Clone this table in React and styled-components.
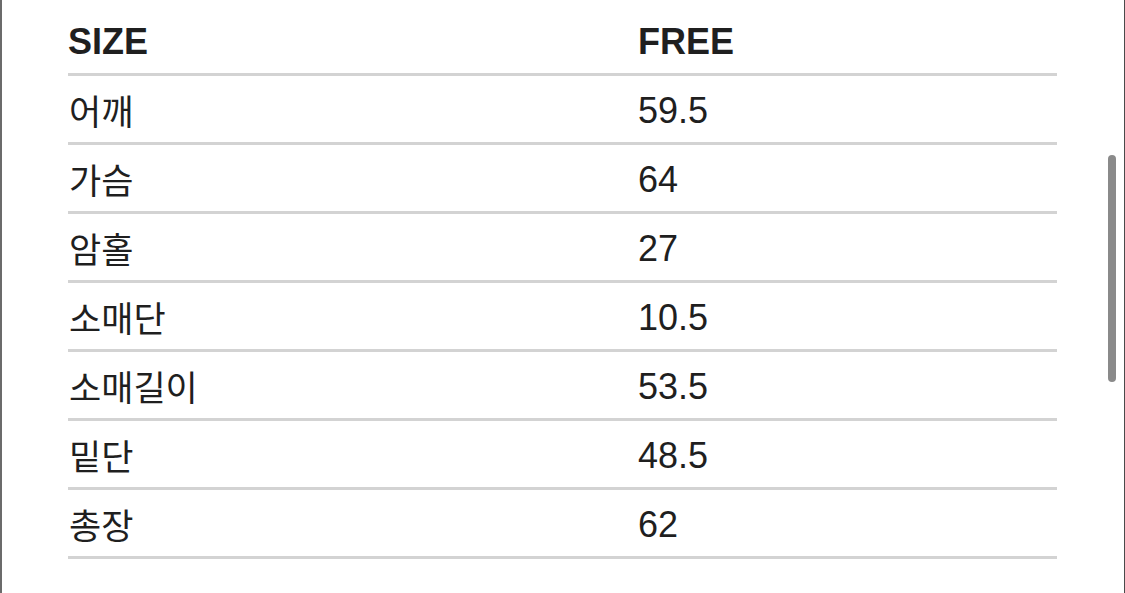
import React from "react";
import styled, { createGlobalStyle } from "styled-components";

const Global = createGlobalStyle`
  html, body { margin: 0; padding: 0; background: #ffffff; }
  body { font-family: "Liberation Sans", "Noto Sans CJK KR", Arial, sans-serif; }
`;

const Frame = styled.div`
  position: relative;
  box-sizing: border-box;
  width: 1125px;
  height: 593px;
  overflow: hidden;
  background: #ffffff;
  border-left: 2px solid #6b6b6b;
  border-right: 1px solid #4a4a4a;
`;

const Table = styled.div`
  width: 989px;
  margin: 7px 0 0 66px;
  display: flex;
  flex-direction: column;
`;

const Row = styled.div`
  display: grid;
  grid-template-columns: 570px 1fr;
  align-items: center;
  height: 66px;
  border-bottom: 3px solid #d3d3d3;
`;

const Cell = styled.div`
  font-family: "Liberation Sans", "Noto Sans CJK KR", Arial, sans-serif;
  font-size: 36px;
  line-height: 1;
  padding-top: 3px;
  color: #1f1f1f;
  font-weight: ${(p) => (p.$head ? 700 : 400)};
  white-space: nowrap;
`;

const Label = styled(Cell)`
  font-family: ${(p) =>
    p.$head
      ? `"Liberation Sans", "Noto Sans CJK KR", sans-serif`
      : `"Noto Sans CJK KR", "Liberation Sans", sans-serif`};
  font-size: ${(p) => (p.$head ? "36px" : "35px")};
  padding-top: ${(p) => (p.$head ? "3px" : "1px")};
  padding-left: ${(p) => (p.$head ? "0" : "1px")};
`;

const Thumb = styled.div`
  position: absolute;
  left: 1106px;
  top: 155px;
  width: 8px;
  height: 227px;
  border-radius: 4px;
  background: #8a8a8a;
`;

const rows = [
  ["어깨", "59.5"],
  ["가슴", "64"],
  ["암홀", "27"],
  ["소매단", "10.5"],
  ["소매길이", "53.5"],
  ["밑단", "48.5"],
  ["총장", "62"],
];

export default function App() {
  return (
    <>
      <Global />
      <Frame>
        <Table>
          <Row>
            <Label $head>SIZE</Label>
            <Cell $head>FREE</Cell>
          </Row>
          {rows.map(([k, v]) => (
            <Row key={k}>
              <Label>{k}</Label>
              <Cell>{v}</Cell>
            </Row>
          ))}
        </Table>
        <Thumb />
      </Frame>
    </>
  );
}
